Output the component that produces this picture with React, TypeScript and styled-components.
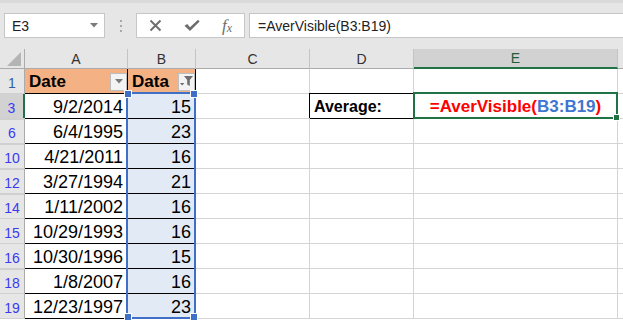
import React from 'react'
import styled, { createGlobalStyle, css } from 'styled-components'

const GlobalStyle = createGlobalStyle`
  html, body {
    margin: 0;
    padding: 0;
    background: #ffffff;
    overflow: hidden;
  }
  body {
    font-family: "Liberation Sans", Arial, sans-serif;
  }
`

interface Row {
  num: number
  date: string
  value: number
}

const rows: Row[] = [
  { num: 3, date: '9/2/2014', value: 15 },
  { num: 6, date: '6/4/1995', value: 23 },
  { num: 10, date: '4/21/2011', value: 16 },
  { num: 12, date: '3/27/1994', value: 21 },
  { num: 14, date: '1/11/2002', value: 16 },
  { num: 15, date: '10/29/1993', value: 16 },
  { num: 16, date: '10/30/1996', value: 15 },
  { num: 18, date: '1/8/2007', value: 16 },
  { num: 19, date: '12/23/1997', value: 23 },
]

const columns = ['A', 'B', 'C', 'D', 'E']

const DropArrow = () => (
  <svg width="8" height="5" viewBox="0 0 8 5">
    <path d="M0 0 H8 L4 4.5 Z" fill="#7a7a7a" />
  </svg>
)

const FilterIcon = () => (
  <svg width="13" height="11" viewBox="0 0 13 11">
    <path d="M4 0 H13 L9.8 4 V10 L7.2 8.6 V4 Z" fill="#6e6e6e" />
    <path d="M0 7 H4.4 L2.2 9.6 Z" fill="#6e6e6e" />
  </svg>
)

const App: React.FC = () => {
  return (
    <>
      <GlobalStyle />
      <Window>
        <FormulaArea>
          <FormulaBar>
            <NameBox>
              <span>E3</span>
              <DropArrow />
            </NameBox>
            <Grip>
              <i />
              <i />
              <i />
            </Grip>
            <ActionBox>
              <svg width="13" height="13" viewBox="0 0 13 13">
                <path d="M1.5 1.5 L11.5 11.5 M11.5 1.5 L1.5 11.5" stroke="#6d6d6d" strokeWidth="1.9" />
              </svg>
              <svg width="16" height="13" viewBox="0 0 16 13">
                <path d="M0.5 6.8 L3.2 5 L6 8.2 L14 0.8 L15.6 2.4 L6 12 Z" fill="#6d6d6d" />
              </svg>
              <Fx>
                f<sub>x</sub>
              </Fx>
            </ActionBox>
            <FormulaInput>=AverVisible(B3:B19)</FormulaInput>
          </FormulaBar>
        </FormulaArea>

        <Sheet>
          <Corner>
            <svg width="14" height="14" viewBox="0 0 14 14">
              <path d="M14 0 V14 H0 Z" fill="#b4b4b4" />
            </svg>
          </Corner>
          {columns.map((c) => (
            <ColHead key={c} $active={c === 'E'}>
              {c}
            </ColHead>
          ))}
          <ColHead />

          <RowHead $color="#2f5f9e">1</RowHead>
          <Cell $bg="#f4b183" $right="#000" $bottom="#000" $bold>
            <HeaderLabel>Date</HeaderLabel>
            <FilterButton>
              <DropArrow />
            </FilterButton>
          </Cell>
          <Cell $bg="#f4b183" $right="#000" $bottom="#000" $bold>
            <HeaderLabel>Data</HeaderLabel>
            <FilterButton>
              <FilterIcon />
            </FilterButton>
          </Cell>
          <Cell />
          <Cell $bottom="#000" />
          <Cell />
          <Cell />

          {rows.map((r, i) => (
            <React.Fragment key={r.num}>
              <RowHead $active={i === 0} $gap={i > 0 && rows[i - 1].num !== r.num - 1}>
                {r.num}
              </RowHead>
              <Cell $align="right" $right="#000" $bottom="#000">
                {r.date}
              </Cell>
              <Cell $align="right" $bg="#e2eaf6" $bottom="#000">
                {r.value}
              </Cell>
              <Cell />
              {i === 0 ? <LabelCell>Average:</LabelCell> : <Cell />}
              {i === 0 ? (
                <Cell $align="center" $bold>
                  <FormulaText>
                    =AverVisible(<Ref>B3:B19</Ref>)
                  </FormulaText>
                </Cell>
              ) : (
                <Cell />
              )}
              <Cell />
            </React.Fragment>
          ))}

          <RangeBox>
            <Handle $pos="tl" />
            <Handle $pos="tr" />
            <Handle $pos="bl" />
            <Handle $pos="br" />
          </RangeBox>
          <ActiveCell>
            <FillHandle />
          </ActiveCell>
        </Sheet>
      </Window>
    </>
  )
}

export default App

const Window = styled.div`
  width: 623px;
  height: 322px;
  overflow: hidden;
  background: #ffffff;
`

const FormulaArea = styled.div`
  height: 49px;
  box-sizing: border-box;
  background: #e6e6e6;
  border-top: 3px solid #dadada;
  padding-top: 10px;
`

const FormulaBar = styled.div`
  display: flex;
  height: 25px;
`

const NameBox = styled.div`
  margin-left: 4px;
  width: 101px;
  box-sizing: border-box;
  background: #ffffff;
  border: 1px solid #c6c6c6;
  display: flex;
  align-items: center;
  justify-content: space-between;
  padding: 0 6px 0 7px;
  font-size: 14px;
  color: #222;
`

const Grip = styled.div`
  width: 31px;
  display: flex;
  flex-direction: column;
  align-items: center;
  justify-content: center;
  gap: 3px;

  i {
    width: 2px;
    height: 2px;
    background: #a8a8a8;
  }
`

const ActionBox = styled.div`
  width: 109px;
  box-sizing: border-box;
  background: #ffffff;
  border: 1px solid #c6c6c6;
  display: flex;
  align-items: center;
  justify-content: space-between;
  padding: 0 12px 0 12px;
`

const Fx = styled.span`
  font-family: "Liberation Serif", "Times New Roman", serif;
  font-style: italic;
  font-size: 17px;
  color: #6d6d6d;
  line-height: 1;

  sub {
    font-size: 12px;
    vertical-align: -1px;
  }
`

const FormulaInput = styled.div`
  margin-left: 4px;
  flex: 1;
  box-sizing: border-box;
  background: #ffffff;
  border: 1px solid #c6c6c6;
  border-right: none;
  display: flex;
  align-items: center;
  padding-left: 8px;
  font-size: 14px;
  color: #222;
`

const Sheet = styled.div`
  position: relative;
  display: grid;
  grid-template-columns: 25px 103px 68px 114px 104px 204px 1fr;
  grid-template-rows: 20px;
  grid-auto-rows: 25px;
`

const Corner = styled.div`
  background: #e6e6e6;
  border-right: 1px solid #ababab;
  border-bottom: 1px solid #ababab;
  display: flex;
  align-items: flex-end;
  justify-content: flex-end;
  padding: 0 3px 2px 0;
`

const ColHead = styled.div<{ $active?: boolean }>`
  box-sizing: border-box;
  background: #e6e6e6;
  border-right: 1px solid #c4c4c4;
  border-bottom: 1px solid #ababab;
  display: flex;
  align-items: center;
  justify-content: center;
  font-size: 14px;
  color: #333;
  ${(p) =>
    p.$active &&
    css`
      background: #d2d2d2;
      border-bottom: 2px solid #217346;
      color: #1e5c3a;
    `}
`

const RowHead = styled.div<{ $active?: boolean; $color?: string; $gap?: boolean }>`
  box-sizing: border-box;
  background: #e6e6e6;
  border-right: 1px solid #ababab;
  border-bottom: 1px solid #d0d0d0;
  display: flex;
  align-items: center;
  justify-content: center;
  padding-top: 3px;
  font-size: 14px;
  color: ${(p) => p.$color || '#3a3af0'};
  ${(p) =>
    p.$gap &&
    css`
      border-top: 2px solid #d0d0d0;
      margin-top: -1px;
    `}
  ${(p) =>
    p.$active &&
    css`
      background: #d2d2d2;
      border-right: 2px solid #217346;
    `}
`

const Cell = styled.div<{
  $bg?: string
  $right?: string
  $bottom?: string
  $align?: 'left' | 'right' | 'center'
  $bold?: boolean
}>`
  box-sizing: border-box;
  min-width: 0;
  background: ${(p) => p.$bg || '#ffffff'};
  border-right: 1px solid ${(p) => p.$right || '#d4d4d4'};
  border-bottom: 1px solid ${(p) => p.$bottom || '#d4d4d4'};
  display: flex;
  align-items: center;
  justify-content: ${(p) =>
    p.$align === 'right' ? 'flex-end' : p.$align === 'center' ? 'center' : 'space-between'};
  padding: 2px 4px 0 4px;
  font-size: 18px;
  font-weight: ${(p) => (p.$bold ? 700 : 400)};
  color: #000;
  white-space: nowrap;
`

const HeaderLabel = styled.span`
  font-size: 17px;
`

const FilterButton = styled.div`
  width: 17px;
  height: 18px;
  box-sizing: border-box;
  margin-right: -4px;
  margin-top: -1px;
  background: #f3f3f3;
  border: 1px solid #bdbdbd;
  display: flex;
  align-items: center;
  justify-content: center;
`

const LabelCell = styled.div`
  box-sizing: border-box;
  background: #ffffff;
  border-right: 1px solid #000;
  border-bottom: 1px solid #000;
  box-shadow: -1px -1px 0 #000;
  display: flex;
  align-items: center;
  padding: 2px 0 0 4px;
  font-size: 16px;
  font-weight: 700;
  color: #000;
`

const FormulaText = styled.span`
  font-size: 17px;
  color: #ff0000;
`

const Ref = styled.span`
  color: #3f76d1;
`

const RangeBox = styled.div`
  position: absolute;
  left: 126px;
  top: 43px;
  width: 70px;
  height: 227px;
  box-sizing: border-box;
  border: 2px solid #3f6fc6;
  pointer-events: none;
`

const Handle = styled.div<{ $pos: 'tl' | 'tr' | 'bl' | 'br' }>`
  position: absolute;
  width: 6px;
  height: 6px;
  background: #3f6fc6;
  border: 1px solid #ffffff;
  ${(p) => (p.$pos[0] === 't' ? 'top: -4px;' : 'bottom: -4px;')}
  ${(p) => (p.$pos[1] === 'l' ? 'left: -4px;' : 'right: -4px;')}
`

const ActiveCell = styled.div`
  position: absolute;
  left: 413px;
  top: 43px;
  width: 205px;
  height: 27px;
  box-sizing: border-box;
  border: 2px solid #217346;
  pointer-events: none;
`

const FillHandle = styled.div`
  position: absolute;
  right: -4px;
  bottom: -4px;
  width: 5px;
  height: 5px;
  background: #217346;
  border: 1px solid #ffffff;
`
